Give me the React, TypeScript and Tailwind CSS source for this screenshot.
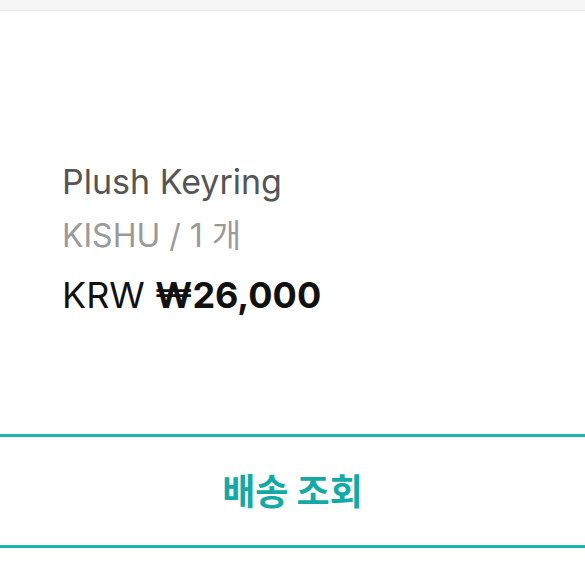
import React from "react";

export default function App() {
  return (
    <div className="w-[585px] h-[585px] bg-white overflow-hidden flex flex-col" style={{ fontFamily: 'Inter, "Noto Sans CJK KR", sans-serif' }}>
      <div className="h-[11px] bg-[#f6f6f6] border-b border-[#e6e6e6] shrink-0" />
      <div className="pl-[62px] pt-[151px] flex flex-col">
        <div className="text-[34px] leading-[40px] text-[#555555]">Plush Keyring</div>
        <div className="text-[32px] leading-[40px] mt-[14px] text-[#9a9a9a]">KISHU / 1 개</div>
        <div className="text-[36px] leading-[40px] mt-[19px] text-[#111111]">
          KRW <span className="font-bold">₩26,000</span>
        </div>
      </div>
      <div className="mt-[119px] h-[114px] border-y-[3px] border-[#1db3ae] flex items-center justify-center">
        <span className="text-[36px] font-bold text-[#13aaa6] -translate-y-[2px]" style={{ fontFamily: '"Noto Sans CJK KR", sans-serif' }}>배송 조회</span>
      </div>
    </div>
  );
}
